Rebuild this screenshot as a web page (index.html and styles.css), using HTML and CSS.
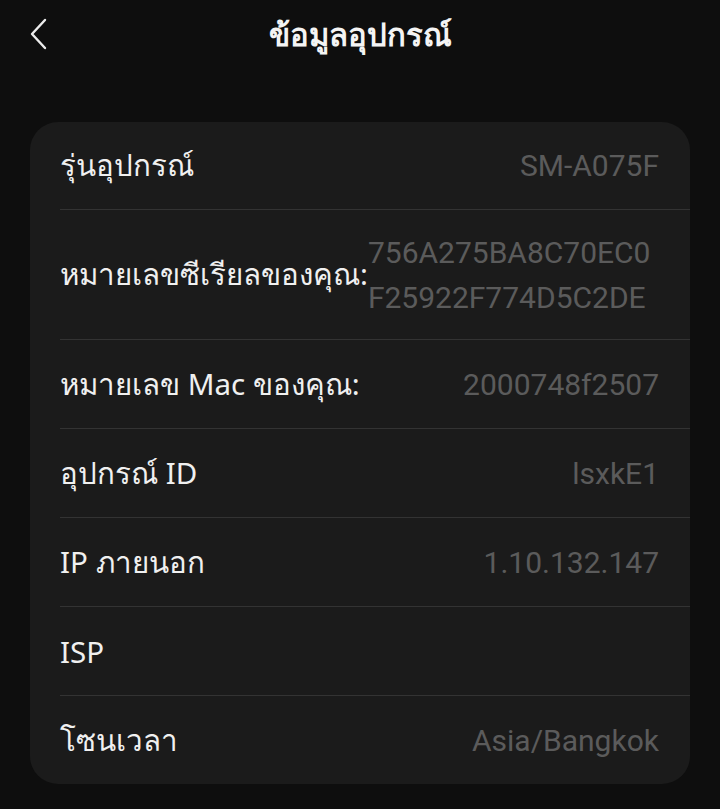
FILE: index.html
```html
<!DOCTYPE html>
<html lang="th">

<head>
  <meta charset="UTF-8">
  <meta name="viewport" content="width=device-width, initial-scale=1.0">
  <title>ข้อมูลอุปกรณ์</title>
  <link rel="stylesheet" href="styles.css">
</head>

<body>
  <header class="topbar">
    <button class="back" aria-label="กลับ">
      <svg width="20" height="34" viewBox="0 0 20 34">
        <path d="M16 3 L3 17 L16 31" fill="none" stroke="#ececec" stroke-width="2.4" stroke-linecap="round" stroke-linejoin="round" />
      </svg>
    </button>
    <h1 class="title">ข้อมูลอุปกรณ์</h1>
  </header>

  <div class="card">
    <div class="row row-first">
      <span class="label">รุ่นอุปกรณ์</span>
      <span class="value">SM-A075F</span>
    </div>
    <div class="row row-tall">
      <span class="label">หมายเลขซีเรียลของคุณ:</span>
      <span class="value value-wrap">
        <span class="line">756A275BA8C70EC0</span>
        <span class="line">F25922F774D5C2DE</span>
      </span>
    </div>
    <div class="row">
      <span class="label">หมายเลข Mac ของคุณ:</span>
      <span class="value">2000748f2507</span>
    </div>
    <div class="row">
      <span class="label">อุปกรณ์ ID</span>
      <span class="value">lsxkE1</span>
    </div>
    <div class="row">
      <span class="label">IP ภายนอก</span>
      <span class="value">1.10.132.147</span>
    </div>
    <div class="row">
      <span class="label">ISP</span>
      <span class="value"></span>
    </div>
    <div class="row">
      <span class="label">โซนเวลา</span>
      <span class="value">Asia/Bangkok</span>
    </div>
  </div>
</body>

</html>
```

FILE: styles.css
```css
body {
  margin: 0;
  background-color: #0e0e0e;
  font-family: "Noto Sans", "DejaVu Sans", sans-serif;
  color: #f0f0f0;
}

.topbar {
  position: relative;
  height: 70px;
  display: flex;
  align-items: center;
  justify-content: center;
}

.back {
  position: absolute;
  left: 29px;
  top: 17px;
  padding: 0;
  border: none;
  background: none;
}

.title {
  margin: 0;
  font-size: 31px;
  font-weight: bold;
  color: #f4f4f4;
}

.card {
  margin: 52px 30px 0;
  background-color: #1b1b1b;
  border-radius: 28px;
  overflow: hidden;
}

.row {
  display: flex;
  align-items: center;
  justify-content: space-between;
  height: 89px;
  margin-left: 30px;
  padding-right: 31px;
  border-bottom: 1px solid #333333;
  box-sizing: border-box;
}

.row-first {
  height: 88px;
}

.row:last-child {
  border-bottom: none;
  height: 88px;
}

.row-tall {
  height: 130px;
}

.label {
  font-size: 29.5px;
  color: #f0f0f0;
  white-space: nowrap;
}

.value {
  font-family: Roboto, "Liberation Sans", sans-serif;
  font-size: 30px;
  color: #5b5b5b;
  text-align: right;
}

.value-wrap {
  flex: 1;
  text-align: left;
  line-height: 45px;
}

.line {
  display: block;
}
```
